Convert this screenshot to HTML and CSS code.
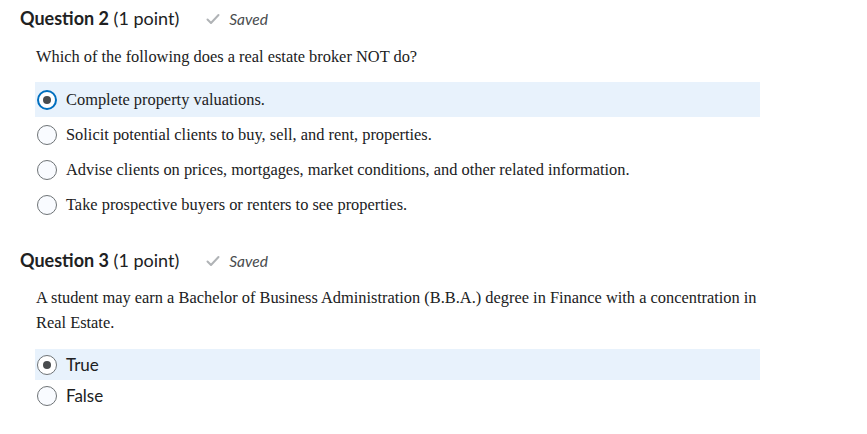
FILE: index.html
```html
<!DOCTYPE html>
<html>
<head>
<meta charset="utf-8">
<link rel="stylesheet" href="styles.css">
</head>
<body>
<div class="page">
  <section class="question">
    <div class="q-head">
      <h2 class="q-title"><strong>Question 2</strong> <span class="pts">(1 point)</span></h2>
      <span class="saved"><svg class="check" width="14" height="12" viewBox="0 0 14 12"><path d="M1.5 6.5 L5 10 L12.5 2" fill="none" stroke="#b0b3b6" stroke-width="2" stroke-linecap="round" stroke-linejoin="round"/></svg>Saved</span>
    </div>
    <div class="q-body">
      <p class="q-text">Which of the following does a real estate broker NOT do?</p>
      <div class="options serif">
        <label class="opt selected"><span class="radio on"></span>Complete property valuations.</label>
        <label class="opt"><span class="radio"></span>Solicit potential clients to buy, sell, and rent, properties.</label>
        <label class="opt"><span class="radio"></span>Advise clients on prices, mortgages, market conditions, and other related information.</label>
        <label class="opt"><span class="radio"></span>Take prospective buyers or renters to see properties.</label>
      </div>
    </div>
  </section>
  <section class="question q3">
    <div class="q-head">
      <h2 class="q-title"><strong>Question 3</strong> <span class="pts">(1 point)</span></h2>
      <span class="saved"><svg class="check" width="14" height="12" viewBox="0 0 14 12"><path d="M1.5 6.5 L5 10 L12.5 2" fill="none" stroke="#b0b3b6" stroke-width="2" stroke-linecap="round" stroke-linejoin="round"/></svg>Saved</span>
    </div>
    <div class="q-body">
      <p class="q-text tall">A student may earn a Bachelor of Business Administration (B.B.A.) degree in Finance with a concentration in Real Estate.</p>
      <div class="options sans">
        <label class="opt tf selected"><span class="radio on"></span>True</label>
        <label class="opt tf"><span class="radio"></span>False</label>
      </div>
    </div>
  </section>
</div>
</body>
</html>
```

FILE: styles.css
```css
html, body { margin: 0; padding: 0; background: #fff; }
.page { padding: 6px 0 0 20px; width: 740px; }
.q-head { display: flex; align-items: baseline; gap: 27px; height: 24px; }
.q-title { margin: 0; font-family: Lato, "Open Sans", sans-serif; font-size: 18px; font-weight: 400; color: #202122; line-height: 24px; }
.q-title strong { font-weight: 700; }
.pts { color: #202122; }
.saved { font-family: Lato, sans-serif; font-style: italic; font-size: 15.5px; color: #494c4e; display: inline-flex; align-items: center; gap: 9px; }
.q-body { padding-left: 15px; }
.q-text { margin: 14px 0 0 1px; font-family: "Liberation Serif", "Times New Roman", serif; font-size: 16.4px; line-height: 25px; color: #202122; width: 725px; }
.options { margin-top: 13px; width: 725px; }
.opt { display: flex; align-items: center; height: 35px; padding-left: 2px; color: #202122; }
.serif .opt { font-family: "Liberation Serif", "Times New Roman", serif; font-size: 16.4px; }
.sans .opt { font-family: Lato, sans-serif; font-size: 17px; height: 31px; }
.opt.selected { background: #e8f2fc; }
.radio { box-sizing: border-box; width: 20px; height: 20px; border-radius: 50%; border: 1px solid #6e7376; background: #f9fbff; margin-right: 9px; flex: none; display: flex; align-items: center; justify-content: center; }
.serif .radio.on { border: 2px solid #006fbf; background: #fff; }
.sans .radio.on { border: 1px solid #6e7376; background: #fff; }
.radio.on::after { content: ""; width: 8px; height: 8px; border-radius: 50%; background: #494c4e; }
.q3 { margin-top: 26px; }
.q-text.tall { margin-top: 13px; }
.sans { margin-top: 14px; }
```
